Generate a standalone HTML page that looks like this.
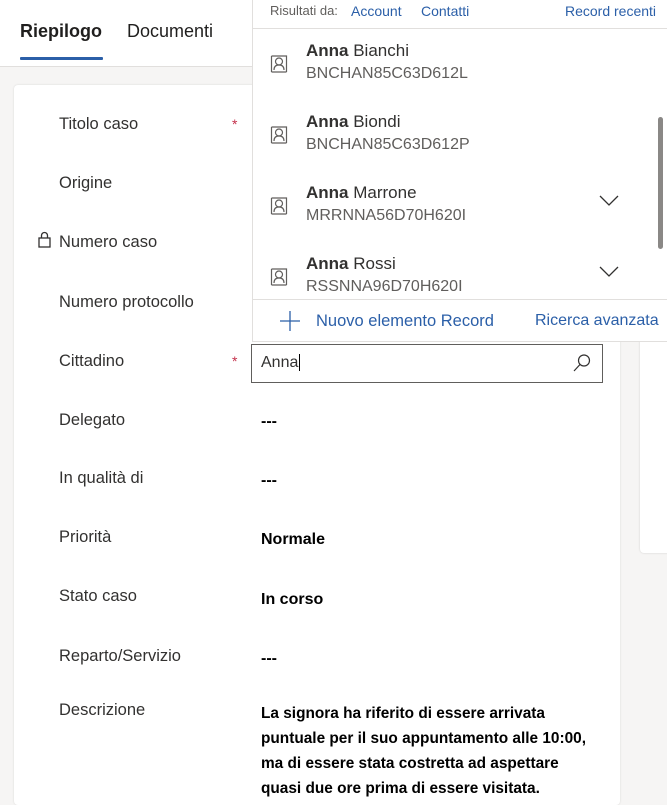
<!DOCTYPE html>
<html><head><meta charset="utf-8"><style>
*{margin:0;padding:0;box-sizing:border-box}
body{width:667px;height:785px;overflow:hidden;background:#f6f5f4;font-family:"Liberation Sans",sans-serif;color:#323130;position:relative}
.tabs{position:absolute;left:0;top:0;width:667px;height:67px;background:#fff;border-bottom:1px solid #e1dfdd}
.tab{position:absolute;top:21px;font-size:18px;color:#201f1e}
.card{position:absolute;left:14px;top:85px;width:606px;height:720px;background:#fff;border-radius:4px;box-shadow:0 0 2px rgba(0,0,0,.12)}
.rcard{position:absolute;left:640px;top:300px;width:40px;height:253px;background:#fff;border-radius:4px;box-shadow:0 0 2px rgba(0,0,0,.15)}
.lbl{position:absolute;left:59px;font-size:16.5px;color:#323130}
.star{position:absolute;left:232px;color:#c4314b;font-size:14px}
.val{position:absolute;left:261px;font-size:16px;font-weight:bold;color:#000}
.desc{position:absolute;left:261px;top:701px;width:335px;font-size:15.4px;font-weight:bold;line-height:25px;color:#000}
.dd{position:absolute;left:252px;top:0;width:415px;height:342px;background:#fff;border-left:1px solid #e1dfdd;border-bottom:1px solid #e1dfdd}
.hdr{position:absolute;left:0;top:0;width:415px;height:29px;border-bottom:1px solid #e1dfdd;font-size:13px}
.hdr span{position:absolute;top:3px}
.link{color:#2b5fa8}
.item{position:absolute;left:0;width:400px;height:60px}
.item .nm{position:absolute;left:53px;top:0;font-size:17px;color:#323130}
.item .cd{position:absolute;left:53px;top:24px;font-size:16px;color:#605e5c}
.item svg.ic{position:absolute;left:17px;top:13px}
.item svg.ch{position:absolute;left:346px;top:12px}
.foot{position:absolute;left:0;top:299px;width:415px;border-top:1px solid #e1dfdd;height:43px;font-size:16.5px}
.sb{position:absolute;left:405px;top:117px;width:5px;height:132px;background:#8a8886;border-radius:3px}
.inp{position:absolute;left:251px;top:344px;width:352px;height:39px;border:1px solid #605e5c;background:#fff}
</style></head><body>
<div class="tabs">
<div class="tab" style="left:20px;font-weight:bold">Riepilogo</div>
<div class="tab" style="left:127px">Documenti</div>
<div style="position:absolute;left:20px;top:57px;width:83px;height:3px;background:#2b5fa8;border-radius:1px"></div>
</div>
<div class="card"></div>
<div class="rcard"></div>
<div class="lbl" style="top:115px">Titolo caso</div><div class="star" style="top:116px">*</div>
<div class="lbl" style="top:174px">Origine</div>
<svg style="position:absolute;left:38px;top:231px" width="14" height="17" viewBox="0 0 14 17"><rect x="1" y="7" width="11" height="9" fill="none" stroke="#323130" stroke-width="1.3"/><path d="M3.5 7V4.5a3 3 0 0 1 6 0V7" fill="none" stroke="#323130" stroke-width="1.3"/></svg>
<div class="lbl" style="top:233px">Numero caso</div>
<div class="lbl" style="top:293px">Numero protocollo</div>
<div class="lbl" style="top:352px">Cittadino</div><div class="star" style="top:353px">*</div>
<div class="lbl" style="top:411px">Delegato</div>
<div class="lbl" style="top:469px">In qualità di</div>
<div class="lbl" style="top:528px">Priorità</div>
<div class="lbl" style="top:587px">Stato caso</div>
<div class="lbl" style="top:647px">Reparto/Servizio</div>
<div class="lbl" style="top:701px">Descrizione</div>
<div class="val" style="top:413px">---</div>
<div class="val" style="top:472px">---</div>
<div class="val" style="top:531px">Normale</div>
<div class="val" style="top:591px">In corso</div>
<div class="val" style="top:650px">---</div>
<div class="desc">La signora ha riferito di essere arrivata puntuale per il suo appuntamento alle 10:00, ma di essere stata costretta ad aspettare quasi due ore prima di essere visitata.</div>
<div class="inp"><span style="position:absolute;left:9px;top:9px;font-size:16px;color:#323130">Anna<span style="border-left:1px solid #000;margin-left:1px"></span></span>
<svg style="position:absolute;left:320px;top:8px" width="20" height="20" viewBox="0 0 20 20"><circle cx="12" cy="7.5" r="5.5" fill="none" stroke="#323130" stroke-width="1.2"/><path d="M8 11.5L2 18" stroke="#323130" stroke-width="1.2"/></svg></div>
<div class="dd">
<div class="hdr"><span style="left:17px;color:#605e5c">Risultati da:</span><span class="link" style="left:98px;font-size:14px">Account</span><span class="link" style="left:168px;font-size:14px">Contatti</span><span class="link" style="left:312px;font-size:14px">Record recenti</span></div>
<div class="item" style="top:41px"><svg class="ic" width="18" height="20" viewBox="0 0 18 20"><path d="M1.5 2v16M1.5 2h15v16M16.5 18h-15" fill="none" stroke="#605e5c" stroke-width="1.2"/><circle cx="9" cy="7.5" r="3.5" fill="none" stroke="#605e5c" stroke-width="1.2"/><path d="M4 16c0-4 2.5-5 5-5s5 1 5 5" fill="none" stroke="#605e5c" stroke-width="1.2"/></svg><div class="nm"><b>Anna</b> Bianchi</div><div class="cd">BNCHAN85C63D612L</div></div>
<div class="item" style="top:112px"><svg class="ic" width="18" height="20" viewBox="0 0 18 20"><path d="M1.5 2v16M1.5 2h15v16M16.5 18h-15" fill="none" stroke="#605e5c" stroke-width="1.2"/><circle cx="9" cy="7.5" r="3.5" fill="none" stroke="#605e5c" stroke-width="1.2"/><path d="M4 16c0-4 2.5-5 5-5s5 1 5 5" fill="none" stroke="#605e5c" stroke-width="1.2"/></svg><div class="nm"><b>Anna</b> Biondi</div><div class="cd">BNCHAN85C63D612P</div></div>
<div class="item" style="top:183px"><svg class="ic" width="18" height="20" viewBox="0 0 18 20"><path d="M1.5 2v16M1.5 2h15v16M16.5 18h-15" fill="none" stroke="#605e5c" stroke-width="1.2"/><circle cx="9" cy="7.5" r="3.5" fill="none" stroke="#605e5c" stroke-width="1.2"/><path d="M4 16c0-4 2.5-5 5-5s5 1 5 5" fill="none" stroke="#605e5c" stroke-width="1.2"/></svg><div class="nm"><b>Anna</b> Marrone</div><div class="cd">MRRNNA56D70H620I</div><svg class="ch" width="20" height="12" viewBox="0 0 20 12"><path d="M1 1l9 9 9-9" fill="none" stroke="#323130" stroke-width="1.3"/></svg></div>
<div class="item" style="top:254px"><svg class="ic" width="18" height="20" viewBox="0 0 18 20"><path d="M1.5 2v16M1.5 2h15v16M16.5 18h-15" fill="none" stroke="#605e5c" stroke-width="1.2"/><circle cx="9" cy="7.5" r="3.5" fill="none" stroke="#605e5c" stroke-width="1.2"/><path d="M4 16c0-4 2.5-5 5-5s5 1 5 5" fill="none" stroke="#605e5c" stroke-width="1.2"/></svg><div class="nm"><b>Anna</b> Rossi</div><div class="cd">RSSNNA96D70H620I</div><svg class="ch" width="20" height="12" viewBox="0 0 20 12"><path d="M1 1l9 9 9-9" fill="none" stroke="#323130" stroke-width="1.3"/></svg></div>
<div class="sb"></div>
<div class="foot">
<svg style="position:absolute;left:27px;top:11px" width="20" height="20" viewBox="0 0 20 20"><path d="M10 0v20M0 10h20" stroke="#2b5fa8" stroke-width="1.3"/></svg>
<span class="link" style="position:absolute;left:63px;top:12px">Nuovo elemento Record</span>
<span class="link" style="position:absolute;left:282px;top:12px;font-size:16px">Ricerca avanzata</span>
</div>
</div>
</body></html>
